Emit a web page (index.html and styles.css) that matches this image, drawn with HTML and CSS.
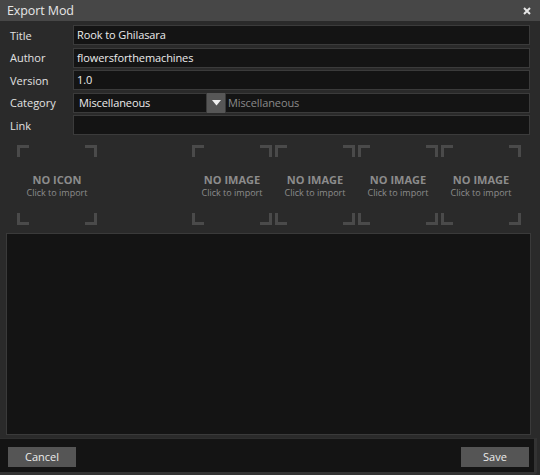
FILE: index.html
```html
<!DOCTYPE html>
<html>
<head>
<meta charset="utf-8">
<link rel="stylesheet" href="styles.css">
</head>
<body>
<div class="window">
  <div class="titlebar">
    <span class="title">Export Mod</span>
    <svg class="close" width="8" height="8" viewBox="0 0 8 8"><path d="M1 1L7 7M7 1L1 7" stroke="#e6e6e6" stroke-width="2"/></svg>
  </div>
  <div class="form">
    <div class="row"><span class="label">Title</span><div class="field">Rook to Ghilasara</div></div>
    <div class="row"><span class="label">Author</span><div class="field">flowersforthemachines</div></div>
    <div class="row"><span class="label">Version</span><div class="field">1.0</div></div>
    <div class="row"><span class="label">Category</span>
      <div class="combo">
        <div class="field select">Miscellaneous</div>
        <div class="drop"><svg width="9" height="6" viewBox="0 0 9 6"><path d="M0 0H9L4.5 5.5Z" fill="#f0f0f0"/></svg></div>
        <div class="field hint">Miscellaneous</div>
      </div>
    </div>
    <div class="row"><span class="label">Link</span><div class="field"></div></div>
  </div>
  <div class="slots">
    <div class="slot icon"><b>NO ICON</b><span>Click to import</span></div>
    <div class="images">
      <div class="slot"><b>NO IMAGE</b><span>Click to import</span></div>
      <div class="slot"><b>NO IMAGE</b><span>Click to import</span></div>
      <div class="slot"><b>NO IMAGE</b><span>Click to import</span></div>
      <div class="slot"><b>NO IMAGE</b><span>Click to import</span></div>
    </div>
  </div>
  <div class="log"></div>
  <div class="footer">
    <div class="btn">Cancel</div>
    <div class="btn">Save</div>
  </div>
</div>
</body>
</html>
```
FILE: styles.css
```css
html, body {
  margin: 0;
  padding: 0;
  background: #1a1a1a;
}
.window {
  width: 540px;
  height: 475px;
  background: #2a2a2a;
  font-family: "Open Sans", "Noto Sans", sans-serif;
  color: #e8e8e8;
  display: flex;
  flex-direction: column;
  overflow: hidden;
}
.titlebar {
  height: 21px;
  background: #474747;
  display: flex;
  align-items: center;
  justify-content: space-between;
  padding: 0 9px 0 7px;
  flex: none;
}
.title {
  font-size: 12.5px;
  color: #e6e6e6;
  letter-spacing: -0.1px;
}
.close { margin-top: 1px; }
.form {
  padding: 4px 10px 0 10px;
  display: flex;
  flex-direction: column;
  gap: 2.5px;
}
.row {
  display: flex;
  align-items: center;
  height: 20px;
}
.label {
  width: 63px;
  font-size: 11px;
  color: #e2e2e2;
}
.field {
  flex: 1;
  height: 20px;
  box-sizing: border-box;
  background: #141414;
  border: 1px solid #3b3b3b;
  font-size: 11px;
  line-height: 18px;
  padding-left: 3px;
  color: #ececec;
  letter-spacing: -0.1px;
}
.combo {
  flex: 1;
  display: flex;
  height: 20px;
}
.select {
  flex: none;
  width: 134px;
  padding-left: 5px;
}
.drop {
  width: 18px;
  height: 20px;
  background: #575757;
  display: flex;
  align-items: center;
  justify-content: center;
}
.hint {
  color: #8a8a8a;
  padding-left: 2px;
}
.slots {
  display: flex;
  padding: 10px 0 0 17px;
  height: 80px;
}
.images {
  display: flex;
  gap: 3px;
  margin-left: 95px;
}
.slot {
  width: 80px;
  height: 80px;
  display: flex;
  flex-direction: column;
  align-items: center;
  justify-content: center;
  color: #8c8c8c;
  --c: #4a4a4a;
  background:
    linear-gradient(var(--c), var(--c)) left top / 12px 3px,
    linear-gradient(var(--c), var(--c)) left top / 3px 12px,
    linear-gradient(var(--c), var(--c)) right top / 12px 3px,
    linear-gradient(var(--c), var(--c)) right top / 3px 12px,
    linear-gradient(var(--c), var(--c)) left bottom / 12px 3px,
    linear-gradient(var(--c), var(--c)) left bottom / 3px 12px,
    linear-gradient(var(--c), var(--c)) right bottom / 12px 3px,
    linear-gradient(var(--c), var(--c)) right bottom / 3px 12px;
  background-repeat: no-repeat;
}
.slot b {
  font-size: 11px;
  font-weight: 700;
  line-height: 15px;
}
.slot span {
  font-size: 9px;
  line-height: 12px;
}
.log {
  margin: 8px 9px 0 6px;
  height: 202px;
  box-sizing: border-box;
  background: #141414;
  border: 1px solid #3a3a3a;
  flex: none;
}
.footer {
  margin-top: 3px;
  flex: 1;
  background: #141414;
  border-top: 1px solid #2f2f2f;
  border-right: 3px solid #333;
  border-bottom: 3px solid #333;
  margin-right: 3px;
  border-bottom-right-radius: 4px;
  display: flex;
  justify-content: space-between;
  align-items: flex-start;
  padding: 8px 5px 0 8px;
}
.btn {
  width: 68px;
  height: 20px;
  background: #555;
  font-size: 11px;
  line-height: 20px;
  text-align: center;
  color: #ececec;
}
```
